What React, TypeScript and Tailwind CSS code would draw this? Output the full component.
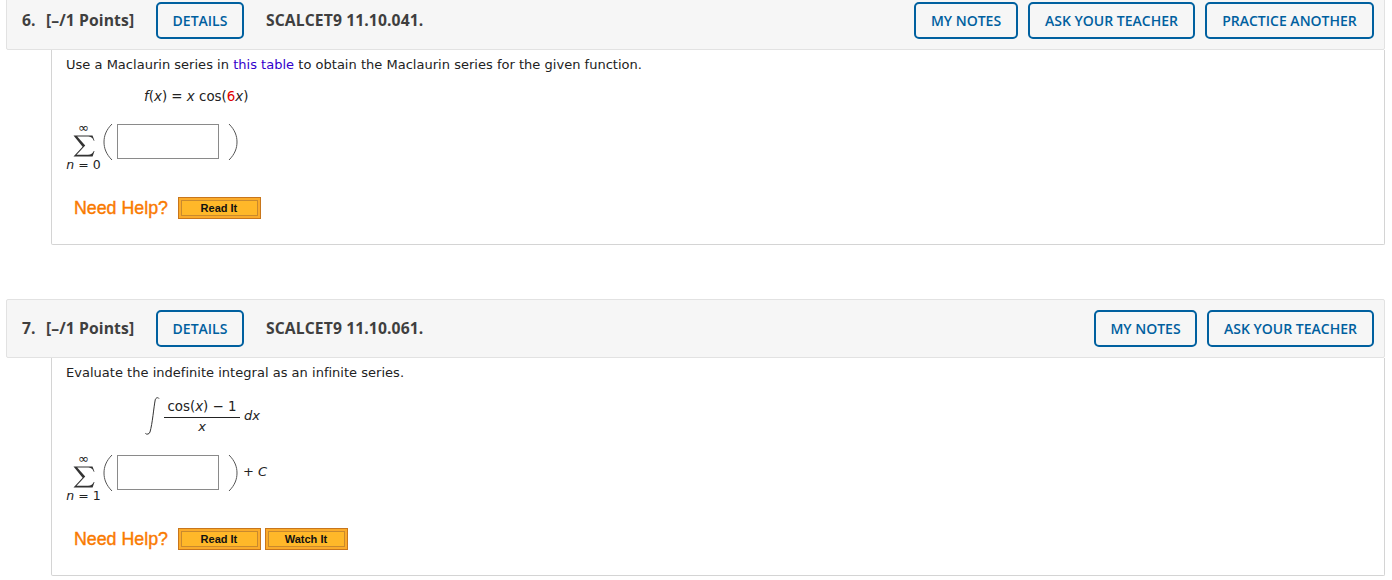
import * as React from "react";

const bodyFont = "font-['DejaVu_Sans',Verdana,sans-serif]";

function HeaderButton({ children, width }: { children: React.ReactNode; width: string }) {
  return (
    <div
      className={`flex h-[37px] items-center justify-center rounded-[5px] border-2 border-[#00609f] text-[14px] font-semibold text-[#00609f] ${width}`}
    >
      {children}
    </div>
  );
}

function QuestionHeader({
  num,
  code,
  actions,
  className,
}: {
  num: string;
  code: string;
  actions: { label: string; width: string }[];
  className?: string;
}) {
  return (
    <div
      className={`ml-[6px] flex h-[59px] w-[1379px] items-center rounded-[2px] border border-[#e2e2e2] bg-[#f6f6f6] pl-[15px] pr-[10px] font-['Open_Sans',sans-serif] text-[#3f3f3f] ${className ?? ""}`}
    >
      <span className="w-[24px] text-[15.7px] font-bold">{num}.</span>
      <span className="w-[110px] text-[15.7px] font-bold tracking-[0.1px]">[–/1 Points]</span>
      <HeaderButton width="w-[88px]">DETAILS</HeaderButton>
      <span className="ml-[22px] text-[15.7px] font-bold tracking-[0.1px]">{code}</span>
      <div className="ml-auto flex gap-[10px]">
        {actions.map((a) => (
          <HeaderButton key={a.label} width={a.width}>
            {a.label}
          </HeaderButton>
        ))}
      </div>
    </div>
  );
}

function Paren({ flip }: { flip?: boolean }) {
  return (
    <svg width="10" height="38" viewBox="0 0 10 38" className={flip ? "-scale-x-100" : ""}>
      <path d="M9 1C3 7 1 13 1 19s2 12 8 18" fill="none" stroke="#555" strokeWidth="1" />
    </svg>
  );
}

function Sigma() {
  return (
    <svg width="22" height="22" viewBox="0 0 22 23" preserveAspectRatio="none">
      <path
        d="M0.5 0.5H19.5L21.5 6H20.8C19.6 3 18 1.6 14 1.6H4.2L12.2 11 3.6 20.6H15c3 0 4.8-1.2 5.8-3.8h.7L19.6 22.5H0.5L9.6 12.4Z"
        fill="#333"
      />
    </svg>
  );
}

function SumAnswer({ from, suffix }: { from: string; suffix?: string }) {
  return (
    <div className="ml-[14px] flex h-[48px] items-start">
      <div className="flex w-[35px] flex-col items-center">
        <span className="h-[12px] text-[13px] leading-[9px] text-[#222]">∞</span>
        <Sigma />
        <span className="mt-[1px] whitespace-nowrap text-[12.5px] leading-[14px] text-[#222]">
          <i>n</i> = {from}
        </span>
      </div>
      <div className="ml-[2px]">
        <Paren />
      </div>
      <div className="ml-[4px] mt-[1px] h-[35px] w-[102px] border border-[#8a8a8a] bg-white" />
      <div className="ml-[9px]">
        <Paren flip />
      </div>
      {suffix ? (
        <span className="ml-[5px] mt-[11px] text-[13px] leading-[14px] text-[#222]">
          + <i>{suffix}</i>
        </span>
      ) : null}
    </div>
  );
}

function OrangeButton({ label }: { label: string }) {
  return (
    <div className="flex h-[22px] w-[83px] items-center justify-center border border-[#c8761c] bg-[#fbab2a] p-[2px]">
      <div className="flex h-full w-full items-center justify-center border border-[#c98a2e] bg-[#ffb829] pr-[1px] font-['Liberation_Sans',Arial,sans-serif] text-[11px] font-bold text-[#111]">
        {label}
      </div>
    </div>
  );
}

function NeedHelp({ buttons }: { buttons: string[] }) {
  return (
    <div className="ml-[22px] flex items-center">
      <span className="font-['Liberation_Sans',Arial,sans-serif] text-[17.8px] font-normal leading-[21px] text-[#f97a00] [-webkit-text-stroke:0.4px_#f97a00]">
        Need Help?
      </span>
      <div className="ml-[10px] flex gap-[4px]">
        {buttons.map((b) => (
          <OrangeButton key={b} label={b} />
        ))}
      </div>
    </div>
  );
}

export default function App() {
  return (
    <div className={`h-[580px] w-[1392px] overflow-hidden bg-white ${bodyFont}`}>
      <QuestionHeader
        num="6"
        code="SCALCET9 11.10.041."
        className="mt-[-9px]"
        actions={[
          { label: "MY NOTES", width: "w-[104px]" },
          { label: "ASK YOUR TEACHER", width: "w-[167px]" },
          { label: "PRACTICE ANOTHER", width: "w-[169px]" },
        ]}
      />
      <div className="ml-[51px] h-[195px] w-[1334px] rounded-b-[2px] border border-t-0 border-[#d4d4d4]">
        <p className="ml-[14px] pt-[7px] text-[13px] leading-[16px] tracking-[0.02px] text-[#222]">
          Use a Maclaurin series in <span className="text-[#3300cc]">this table</span> to obtain the Maclaurin
          series for the given function.
        </p>
        <p className="ml-[92px] mt-[16px] text-[13.4px] leading-[16px] text-[#222]">
          <i>f</i>(<i>x</i>) = <i>x</i> cos(<span className="text-[#e00000]">6</span>
          <i>x</i>)
        </p>
        <div className="mt-[18px]">
          <SumAnswer from="0" />
        </div>
        <div className="mt-[26px]">
          <NeedHelp buttons={["Read It"]} />
        </div>
      </div>

      <QuestionHeader
        num="7"
        code="SCALCET9 11.10.061."
        className="mt-[54px]"
        actions={[
          { label: "MY NOTES", width: "w-[103px]" },
          { label: "ASK YOUR TEACHER", width: "w-[167px]" },
        ]}
      />
      <div className="ml-[51px] h-[218px] w-[1334px] rounded-b-[2px] border border-t-0 border-[#d4d4d4]">
        <p className="ml-[14px] pt-[7px] text-[13px] leading-[16px] tracking-[0.02px] text-[#222]">
          Evaluate the indefinite integral as an infinite series.
        </p>
        <div className="ml-[92px] mt-[15px] flex h-[40px] items-center text-[13px] text-[#222]">
          <svg width="16" height="40" viewBox="0 0 16 40">
            <path
              d="M15 2.5c-1-1.4-3.2-1-3.8 1.5C9.8 11 8.4 28 6 36c-.6 2.2-3.4 2.8-4.6 1.4"
              fill="none"
              stroke="#333"
              strokeWidth="1"
            />
          </svg>
          <div className="ml-[4px] flex w-[76px] flex-col items-center">
            <span className="text-[13.4px] leading-[20px]">
              cos(<i>x</i>) − 1
            </span>
            <span className="h-px w-full bg-[#222]" />
            <i className="text-[13px] leading-[18px]">x</i>
          </div>
          <i className="ml-[4px] text-[13px]">dx</i>
        </div>
        <div className="mt-[18px]">
          <SumAnswer from="1" suffix="C" />
        </div>
        <div className="mt-[26px]">
          <NeedHelp buttons={["Read It", "Watch It"]} />
        </div>
      </div>
    </div>
  );
}
